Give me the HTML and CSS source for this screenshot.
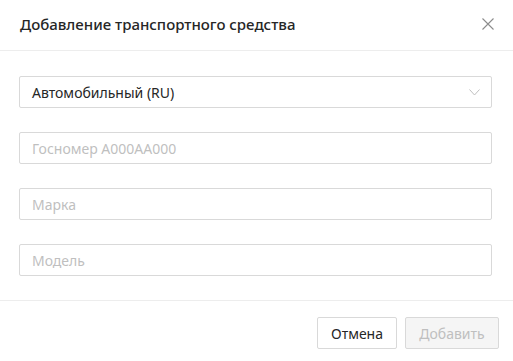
FILE: index.html
```html
<!DOCTYPE html>
<html lang="ru">
<head>
  <meta charset="UTF-8">
  <meta name="viewport" content="width=device-width, initial-scale=1.0">
  <title>Добавление транспортного средства</title>
  <link rel="stylesheet" href="styles.css">
</head>
<body>
  <div class="modal">
    <div class="modal-header">
      <div class="modal-title">Добавление транспортного средства</div>
      <button class="close" aria-label="Закрыть">
        <svg width="12" height="12" viewBox="0 0 12 12">
          <path d="M0.5 0.5 L11.5 11.5 M11.5 0.5 L0.5 11.5" stroke="#8c8c8c" stroke-width="1.1" fill="none"/>
        </svg>
      </button>
    </div>
    <div class="modal-body">
      <div class="select">
        <span>Автомобильный (RU)</span>
        <svg width="11" height="7" viewBox="0 0 11 7">
          <path d="M0.5 0.5 L5.5 6 L10.5 0.5" stroke="#bfbfbf" stroke-width="1" fill="none"/>
        </svg>
      </div>
      <input class="field" type="text" placeholder="Госномер А000АА000">
      <input class="field" type="text" placeholder="Марка">
      <input class="field" type="text" placeholder="Модель">
    </div>
    <div class="modal-footer">
      <button class="btn btn-cancel">Отмена</button>
      <button class="btn btn-add" disabled>Добавить</button>
    </div>
  </div>
</body>
</html>
```

FILE: styles.css
```css
body {
  margin: 0;
  font-family: "Noto Sans", "Open Sans", sans-serif;
  background: #fff;
  color: rgba(0, 0, 0, 0.85);
}
.modal {
  width: 513px;
  height: 361px;
  display: flex;
  flex-direction: column;
}
.modal-header {
  height: 51px;
  box-sizing: border-box;
  border-bottom: 1px solid #ededed;
  display: flex;
  align-items: center;
  justify-content: space-between;
  padding: 0 19px 2px 20px;
}
.modal-title {
  font-size: 15px;
  font-weight: 500;
  color: #262626;
}
.close {
  border: none;
  background: none;
  padding: 0;
  width: 12px;
  height: 12px;
  display: flex;
  cursor: pointer;
}
.modal-body {
  padding: 25px 21px 24px 19px;
  display: flex;
  flex-direction: column;
  gap: 24px;
  border-bottom: 1px solid #ededed;
}
.select,
.field {
  height: 32px;
  box-sizing: border-box;
  border: 1px solid #d9d9d9;
  border-radius: 2px;
  padding: 0 11px 0 12px;
  font-family: inherit;
  font-size: 14px;
  color: #262626;
  background: #fff;
}
.select {
  display: flex;
  align-items: center;
  justify-content: space-between;
}
.field::placeholder {
  color: #bfbfbf;
}
.modal-footer {
  display: flex;
  justify-content: flex-end;
  gap: 8px;
  padding: 16px 14px 12px;
}
.btn {
  height: 32px;
  padding: 0;
  border: 1px solid #d9d9d9;
  border-radius: 2px;
  background: #fff;
  font-family: inherit;
  font-size: 14px;
  color: #262626;
  cursor: pointer;
}
.btn-cancel {
  width: 80px;
}
.btn-add {
  width: 94px;
}
.btn:disabled {
  background: #f5f5f5;
  color: #bfbfbf;
  cursor: not-allowed;
}
```
